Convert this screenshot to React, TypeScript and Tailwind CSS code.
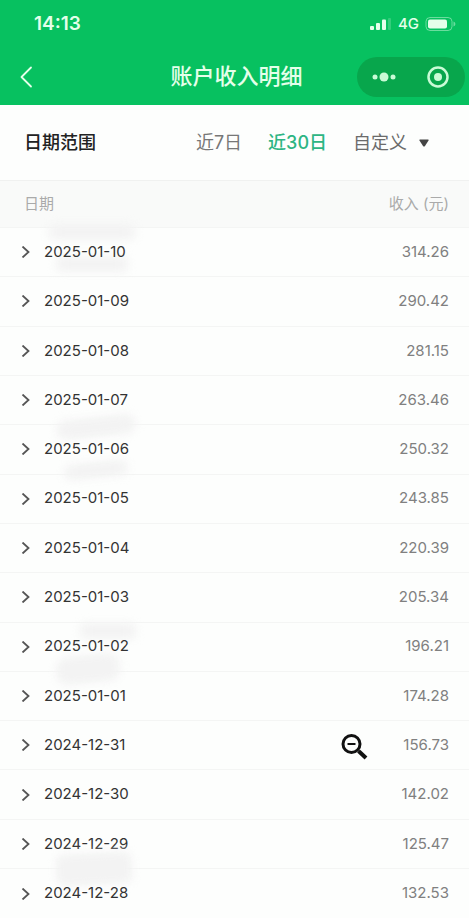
import React, { useState } from "react";

interface IncomeRecord {
  date: string;
  amount: string;
  smudges?: string[];
}

const records: IncomeRecord[] = [
  {
    date: "2025-01-10",
    amount: "314.26",
    smudges: ["left-12 -top-1 h-4 w-22 rounded-full", "left-14 bottom-1 h-4 w-18 rounded-md"],
  },
  { date: "2025-01-09", amount: "290.42" },
  { date: "2025-01-08", amount: "281.15" },
  { date: "2025-01-07", amount: "263.46" },
  {
    date: "2025-01-06",
    amount: "250.32",
    smudges: ["left-14 -top-2 h-5 w-20 -rotate-6 rounded-full", "left-16 -bottom-1 h-4 w-16 -rotate-6 rounded-full"],
  },
  { date: "2025-01-05", amount: "243.85" },
  { date: "2025-01-04", amount: "220.39" },
  { date: "2025-01-03", amount: "205.34" },
  {
    date: "2025-01-02",
    amount: "196.21",
    smudges: ["left-20 top-0 h-4 w-14 rounded-md", "left-14 -bottom-3 h-7 w-16 -rotate-6 rounded-xl"],
  },
  { date: "2025-01-01", amount: "174.28" },
  { date: "2024-12-31", amount: "156.73" },
  { date: "2024-12-30", amount: "142.02" },
  { date: "2024-12-29", amount: "125.47" },
  {
    date: "2024-12-28",
    amount: "132.53",
    smudges: ["left-14 -top-4 h-8 w-19 -rotate-3 rounded-lg"],
  },
];

const StatusBar: React.FC = () => (
  <div className="flex h-12 items-center justify-between pl-[34px] pr-3">
    <span className="text-[19px] font-semibold">14:13</span>
    <div className="flex items-center gap-1.5">
      <svg className="h-3 w-6" viewBox="0 0 24 12" fill="currentColor" aria-hidden="true">
        <rect x="2" y="8" width="4" height="4" rx="1" />
        <rect x="8" y="5" width="4" height="7" rx="1" />
        <rect x="14" y="1.500" width="4" height="10.500" rx="1" />
        <rect x="20" y="0" width="3" height="12" rx="1" opacity="0.2" />
      </svg>
      <span className="text-[15px] font-medium">4G</span>
      <svg className="h-4 w-8" viewBox="0 0 32 16" aria-hidden="true">
        <rect x="1" y="1.500" width="26" height="13" rx="4" fill="none" stroke="currentColor" opacity="0.45" />
        <rect x="3" y="3.500" width="19" height="9" rx="2" fill="currentColor" />
        <path d="M28.500 5.500c2.500 1 2.500 4 0 5z" fill="currentColor" opacity="0.45" />
      </svg>
    </div>
  </div>
);

const NavBar: React.FC = () => (
  <div className="grid h-[57px] grid-cols-[1fr_auto_1fr] items-center pl-2 pr-1">
    <button type="button" aria-label="返回" className="ml-2 h-6 w-8 justify-self-start">
      <svg className="h-6 w-5" viewBox="0 0 20 24" fill="none" stroke="currentColor" strokeWidth="1.800" strokeLinecap="round" strokeLinejoin="round">
        <path d="M15 2.500 5.500 12 15 21.500" />
      </svg>
    </button>
    <h1 className="text-[22px] font-medium">账户收入明细</h1>
    <div className="flex h-10 w-[108px] items-center justify-around justify-self-end rounded-full bg-[#08a64c] text-[#c9fbd6]">
      <button type="button" aria-label="更多">
        <svg className="h-6 w-6" viewBox="0 0 24 24" fill="currentColor">
          <circle cx="3" cy="12" r="2.500" />
          <circle cx="12" cy="12" r="4.500" />
          <circle cx="21" cy="12" r="2.500" />
        </svg>
      </button>
      <button type="button" aria-label="关闭">
        <svg className="h-6 w-6" viewBox="0 0 24 24" fill="currentColor">
          <circle cx="12" cy="12" r="9.500" fill="none" stroke="currentColor" strokeWidth="2.500" />
          <circle cx="12" cy="12" r="4" />
        </svg>
      </button>
    </div>
  </div>
);

const App: React.FC = () => {
  const [range, setRange] = useState("30");
  const [opened, setOpened] = useState<string | null>(null);

  const tabClass = (value: string) =>
    range === value ? "font-medium text-[#2db583]" : "text-[#777777]";

  return (
    <div className="flex min-h-screen flex-col bg-[#fdfefd] font-[Inter,'Noto_Sans_CJK_SC',sans-serif]">
      <header className="bg-[#07c160] text-[#e4ffea]">
        <StatusBar />
        <NavBar />
      </header>

      <section className="flex h-[75px] items-center justify-between pl-6 pr-10">
        <h2 className="text-lg font-medium text-[#222222]">日期范围</h2>
        <div className="flex items-center gap-[26px] text-lg">
          <button type="button" className={tabClass("7")} onClick={() => setRange("7")}>
            近7日
          </button>
          <button type="button" className={tabClass("30")} onClick={() => setRange("30")}>
            近30日
          </button>
          <div className="flex items-center gap-3 text-[#6b6b6b]">
            <select aria-label="自定义" className="appearance-none bg-transparent">
              <option>自定义</option>
            </select>
            <svg className="h-2 w-2.5" viewBox="0 0 10 8" fill="#444444" aria-hidden="true">
              <path d="M1 0.500h8q1 0 .5 1L6 7q-1 1-2 0L.5 1.500q-.5-1 .5-1z" />
            </svg>
          </div>
        </div>
      </section>

      <table className="w-full flex-1">
        <thead>
          <tr className="h-[47px] border-t border-[#f0f1f0] bg-[#f9faf9] text-[15px] text-[#aaaaaa]">
            <th className="pl-6 text-left font-normal">日期</th>
            <th className="pr-5 text-right font-normal">收入 (元)</th>
          </tr>
        </thead>
        <tbody>
          {records.map((record) => (
            <tr key={record.date} className="h-12 border-t border-[#f4f5f4]">
              <td className="relative pl-5">
                {record.smudges?.map((smudge) => (
                  <span key={smudge} className={`absolute bg-[#f3f3f3] blur-xs ${smudge}`} />
                ))}
                <button
                  type="button"
                  className="relative flex items-center gap-3 text-[15px] text-[#333333]"
                  aria-expanded={opened === record.date}
                  onClick={() => setOpened(opened === record.date ? null : record.date)}
                >
                  <svg className="h-3 w-3" viewBox="0 0 12 12" fill="none" stroke="#555555" strokeWidth="1.800">
                    <path d="M2.500 .5 8.500 6 2.500 11.500" />
                  </svg>
                  {record.date}
                </button>
              </td>
              <td className="relative pr-5 text-right text-[15px] text-[#808080]">
                {record.amount}
                {record.date === "2024-12-31" && (
                  <svg className="absolute right-25 top-3 h-7 w-7" viewBox="0 0 28 28" fill="none" stroke="#111111" aria-hidden="true">
                    <circle cx="10.500" cy="11" r="8.500" strokeWidth="3" />
                    <path d="M6.500 11h8" strokeWidth="2" />
                    <path d="m17.500 18 7.500 7" strokeWidth="4" />
                  </svg>
                )}
              </td>
            </tr>
          ))}
        </tbody>
      </table>
    </div>
  );
};

export default App;
